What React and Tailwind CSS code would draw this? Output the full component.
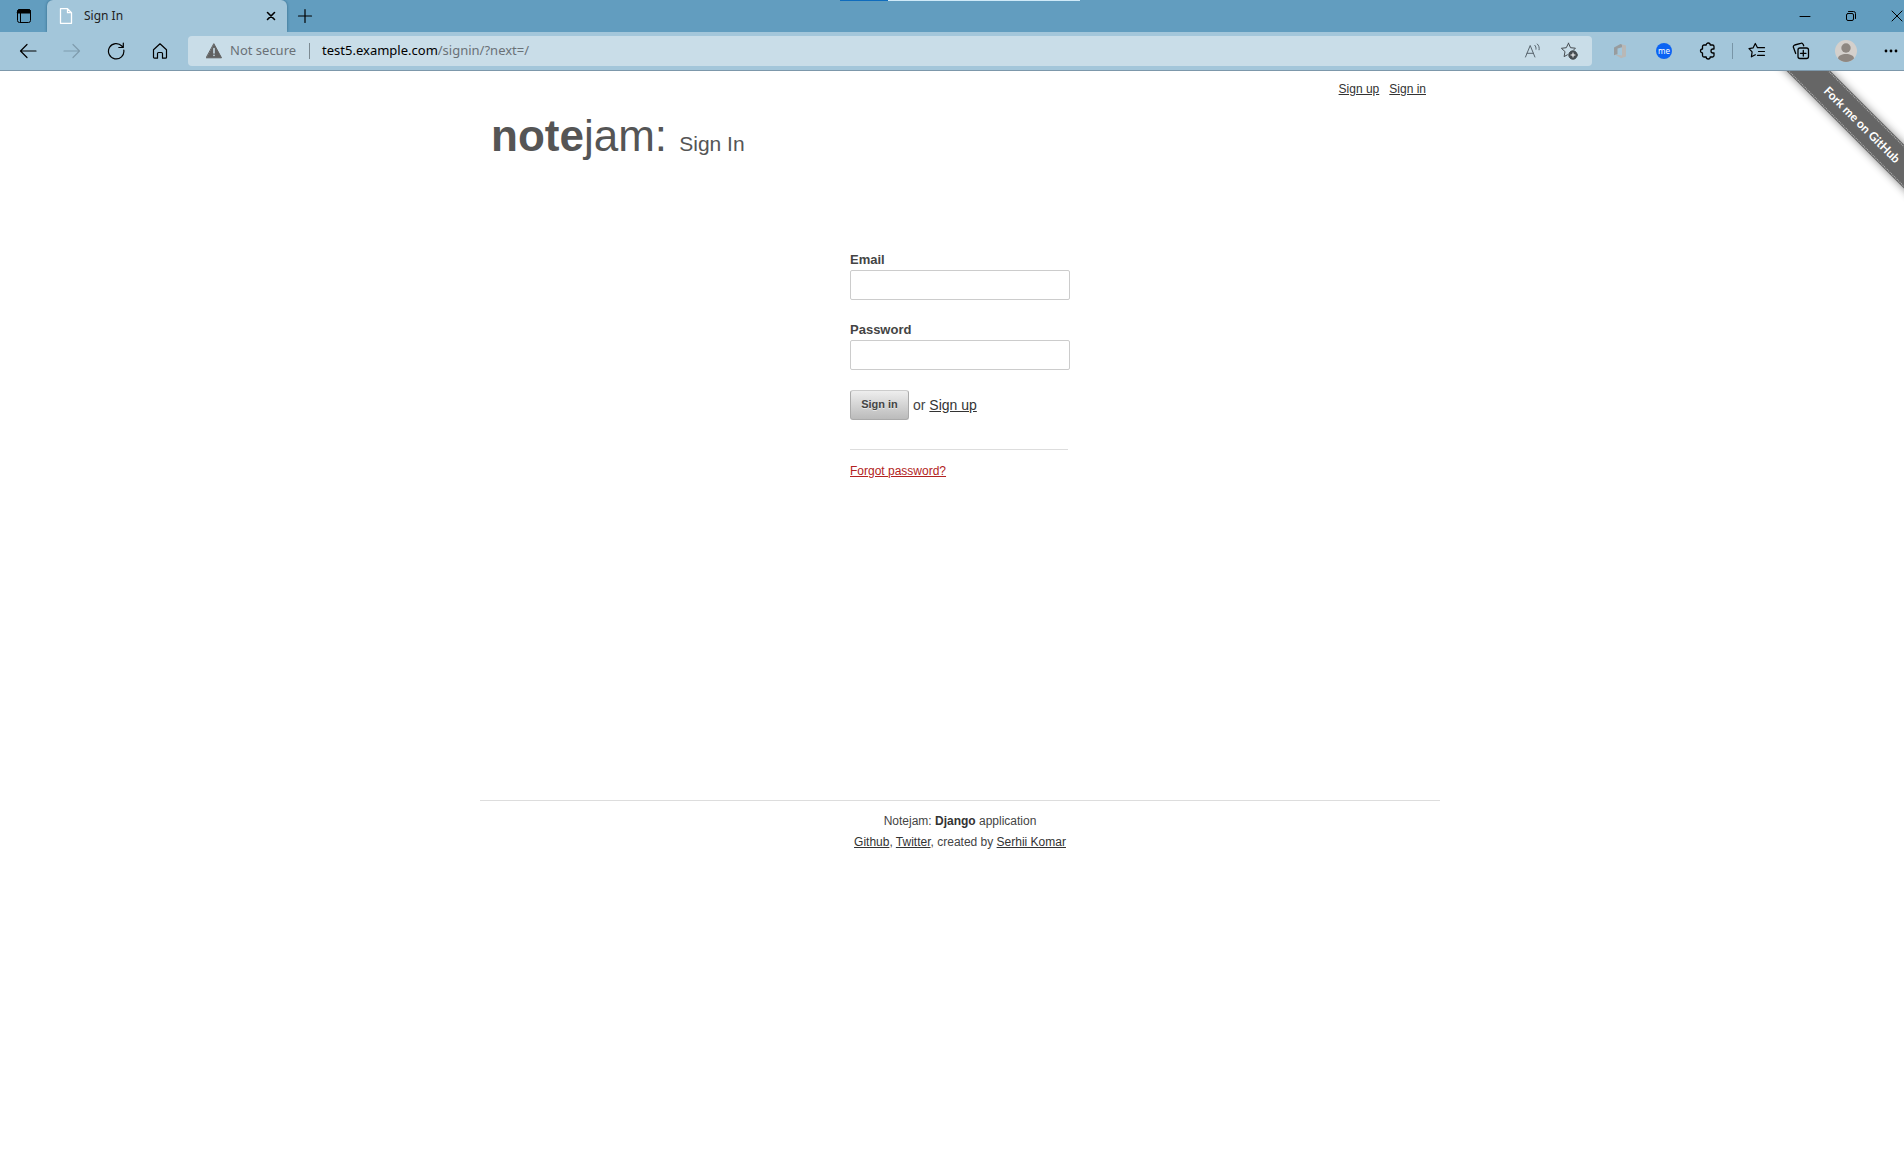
import React from "react";

function Icon({ size = 16, className = "", sw = 1, children }) {
  return (
    <svg width={size} height={size} viewBox={`0 0 ${size} ${size}`} fill="none" stroke="currentColor" strokeWidth={sw} strokeLinecap="round" strokeLinejoin="round" className={`shrink-0 ${className}`} aria-hidden="true">
      {children}
    </svg>
  );
}

function BarButton({ label, className = "w-11", children }) {
  return (
    <button type="button" aria-label={label} className={`flex h-8 shrink-0 items-center justify-center ${className}`}>
      {children}
    </button>
  );
}

function TabStrip() {
  return (
    <div className="flex h-8 bg-[#629dbf]">
      <BarButton label="Tab actions" className="w-[47px]">
        <Icon size={16}>
          <rect x="1.5" y="1.5" width="13" height="13" rx="2" />
          <path d="M1.5 3.5a2 2 0 0 1 2-2h9a2 2 0 0 1 2 2V5h-13z" fill="currentColor" />
          <path d="M4.5 5v9.500" />
        </Icon>
      </BarButton>
      <div className="flex w-60 items-center rounded-t-md bg-[#a3c6da] pl-[11px] shadow-[0_0_3px_#2f6686]">
        <Icon size={16} className="text-white" sw={1.3}>
          <path d="M2.500 .7h7l4 4v10.600h-11zM9.500 .7v4h4" />
        </Icon>
        <span className="ml-[10px] flex-1 text-xs text-[#222]">Sign In</span>
        <BarButton label="Close tab" className="w-8">
          <Icon size={16} sw={1.6}>
            <path d="M4.500 4.500l7 7M11.500 4.500l-7 7" />
          </Icon>
        </BarButton>
      </div>
      <BarButton label="New tab" className="w-9">
        <Icon size={16} sw={1.2}>
          <path d="M8 1.500v13M1.500 8h13" />
        </Icon>
      </BarButton>
      <div className="-mr-4 ml-auto flex">
        <BarButton label="Minimize" className="w-[46px]">
          <Icon size={12}>
            <path d="M1 6.500h10" />
          </Icon>
        </BarButton>
        <BarButton label="Restore" className="w-[46px]">
          <Icon size={12}>
            <rect x="1.500" y="3.500" width="7" height="7" rx="1.500" />
            <path d="M3.500 1.500h5a2 2 0 0 1 2 2v5" />
          </Icon>
        </BarButton>
        <BarButton label="Close" className="w-[46px]">
          <Icon size={12}>
            <path d="M1 1l10 10M11 1L1 11" />
          </Icon>
        </BarButton>
      </div>
      <div className="absolute inset-x-0 top-0 flex h-px justify-center pl-4">
        <span className="w-12 bg-[#0f6cbd]" />
        <span className="w-48 bg-[#cfeaf8]" />
      </div>
    </div>
  );
}

function Toolbar() {
  return (
    <div className="relative z-10 flex h-[39px] items-center border-b border-[#7d98ab] bg-[#a3c6da]">
      <div className="flex pl-[6px]">
        <BarButton label="Back">
          <Icon size={18} sw={1.2}>
            <path d="M17 9H1.500M8 2.500L1.500 9 8 15.500" />
          </Icon>
        </BarButton>
        <BarButton label="Forward">
          <Icon size={18} sw={1.2} className="text-[#7f9cad]">
            <path d="M1 9h15.500M10 2.500l6.500 6.500-6.500 6.500" />
          </Icon>
        </BarButton>
        <BarButton label="Refresh">
          <Icon size={18} sw={1.2}>
            <path d="M16.800 8.200A7.700 7.700 0 1 1 14.800 4L16 5.300M16.300 1v4.500h-4.500" />
          </Icon>
        </BarButton>
        <BarButton label="Home">
          <Icon size={18} sw={1.2}>
            <path d="M2.500 7.800L9 1.800l6.500 6v7.400a1 1 0 0 1-1 1h-3v-4.700a1 1 0 0 0-1-1h-3a1 1 0 0 0-1 1v4.700h-3a1 1 0 0 1-1-1z" />
          </Icon>
        </BarButton>
      </div>
      <div className="ml-[6px] flex h-[30px] min-w-0 flex-1 items-center rounded bg-[#c9dde8] pl-[18px] text-[13px]">
        <Icon size={16} className="text-[#616161]">
          <path d="M8 1L15.500 14.800H.5z" fill="currentColor" />
          <path d="M8 5.500v4.500M8 12.300v.2" stroke="#c9dde8" strokeWidth="1.6" />
        </Icon>
        <span className="ml-2 text-[#6a7177]">Not secure</span>
        <span className="mr-3 ml-[13px] h-4 w-px bg-[#7c8a92]" />
        <a href="#address" className="flex-1 whitespace-nowrap text-[#6a7177]">
          <span className="text-black">test5.example.com</span>/signin/?next=/
        </a>
        <BarButton label="Read aloud" className="w-9">
          <Icon size={18} className="text-[#58656e]">
            <path d="M1.500 15L6.200 3.500 10.900 15M3 11.300h6.400M10.800 3.300c1 1 1.400 2.300 1.200 3.900M13.300 2c1.600 1.500 2.200 3.500 1.800 5.800" />
          </Icon>
        </BarButton>
        <BarButton label="Add to favorites" className="mr-[5px] w-9">
          <Icon size={18} className="text-[#454b50]">
            <path d="M8.500 1.200l2 4.500 4.900.5-1.500 1.500M8.500 1.200l-2.200 4.500-4.900.6 3.600 3.300-.9 5 3.300-1.800" />
            <circle cx="13" cy="13" r="4.200" fill="currentColor" />
            <path d="M13 11v4M11 13h4" stroke="#fff" />
          </Icon>
        </BarButton>
      </div>
      <div className="-mr-[9px] ml-[6px] flex items-center">
        <BarButton label="Office extension">
          <Icon size={16}>
            <path d="M2 4.500L8.500 1l1.500.6v2.600L5.500 5.500v5.700L2 12.300z" fill="#989c9e" stroke="none" />
            <path d="M8.500 1L14 2.600v10.800L9 15.300l-6-3.700 7 .9V1.700z" fill="#b9b8b6" stroke="none" />
          </Icon>
        </BarButton>
        <BarButton label="me extension">
          <span className="flex size-4 items-center justify-center rounded-full bg-[#0b63f3] text-[8px] leading-none text-white">me</span>
        </BarButton>
        <BarButton label="Extensions">
          <Icon size={18} sw={1.3}>
            <path d="M5 3h2.200a2 2 0 0 1 4 0h2.300a1.500 1.500 0 0 1 1.500 1.500V7h-1a2 2 0 0 0 0 4h1v2.500a1.500 1.500 0 0 1-1.500 1.500h-2.300a2 2 0 0 1-4 0H5a1.500 1.500 0 0 1-1.500-1.500V11a2 2 0 0 1 0-4V4.500A1.500 1.500 0 0 1 5 3z" />
          </Icon>
        </BarButton>
        <span className="mx-[2px] h-4 w-px bg-[#7895a7]" />
        <BarButton label="Favorites">
          <Icon size={18} sw={1.2}>
            <path d="M9.500 5.700L7.300 1.500 5.200 5.800l-4.200.8 3.100 3.300-.7 4.900 3.900-2.100M9.500 5.700h7M10.500 9.500h6M9.500 13.300h7" />
          </Icon>
        </BarButton>
        <BarButton label="Collections">
          <Icon size={18} sw={1.3}>
            <rect x="6" y="6" width="10.500" height="10.500" rx="2" />
            <path d="M11.300 8.500v5.500M8.500 11.300h5.500M3.700 11.500L1.500 5.600a2 2 0 0 1 1.200-2.600l6-1.700a2 2 0 0 1 2.500 1.300l.5 1.200" />
          </Icon>
        </BarButton>
        <BarButton label="Profile" className="w-[46px]">
          <svg width="22" height="22" viewBox="0 0 22 22" aria-hidden="true">
            <circle cx="11" cy="11" r="11" fill="#d4d0cc" />
            <circle cx="11" cy="8" r="4.700" fill="#8e8781" />
            <path d="M3 18.500c0-6 16-6 16 0a11 11 0 0 1-16 0z" fill="#8e8781" />
          </svg>
        </BarButton>
        <BarButton label="Settings and more">
          <Icon size={16}>
            <g fill="currentColor" stroke="none">
              <circle cx="3" cy="8" r="1.400" />
              <circle cx="8" cy="8" r="1.400" />
              <circle cx="13" cy="8" r="1.400" />
            </g>
          </Icon>
        </BarButton>
      </div>
    </div>
  );
}

function Ribbon() {
  return (
    <div className="absolute top-0 right-0 size-[150px] overflow-hidden">
      <a href="#github" className="absolute top-[41px] -left-[9px] flex h-[31px] w-60 rotate-45 items-center justify-center bg-[#666] py-px font-[Lato,sans-serif] text-xs font-bold text-white shadow-[0_0_8px_#888]">
        <span className="flex h-full w-full items-center justify-center border-y border-dotted border-[#b5b5b5] pr-2">Fork me on GitHub</span>
      </a>
    </div>
  );
}

function Field({ id, label, type }) {
  return (
    <div className="mb-5">
      <label htmlFor={id} className="block h-5 text-[13px] leading-5 font-bold">{label}</label>
      <input id={id} type={type} className="block h-[30px] w-[220px] rounded-xs border border-[#ccc] bg-white px-1 outline-none" />
    </div>
  );
}

const link = "text-[#333] underline";

export default function App() {
  return (
    <div className="min-h-screen overflow-hidden bg-white">
      <header className="relative overflow-hidden font-['Noto_Sans','Open_Sans',sans-serif] text-black">
        <TabStrip />
        <Toolbar />
      </header>
      <div className="relative pl-4 font-['Liberation_Sans',Arial,sans-serif] text-sm text-[#444]">
        <Ribbon />
        <div className="mx-auto max-w-[960px]">
          <nav className="flex justify-end gap-[10px] pt-2 pr-[14px] text-xs leading-5">
            <a href="#signup" className={link}>Sign up</a>
            <a href="#signin" className={link}>Sign in</a>
          </nav>
          <h1 className="mt-3 ml-[11px] text-[44px] leading-[50px] text-[#555]">
            <a href="#home"><b>note</b>jam:</a> <span className="text-[21px]">Sign In</span>
          </h1>
          <main className="mx-auto mt-[81px] w-[220px]">
            <form onSubmit={(e) => e.preventDefault()}>
              <Field id="email" label="Email" type="email" />
              <Field id="password" label="Password" type="password" />
              <div className="flex items-center gap-1">
                <button type="submit" className="h-[30px] w-[59px] rounded-[3px] border border-[#aaa] border-t-[#ccc] bg-linear-to-b from-[#eee] to-[#bbb] text-[11px] font-bold [text-shadow:0_1px_#fff8]">Sign in</button>
                <p>or <a href="#signup" className={link}>Sign up</a></p>
              </div>
            </form>
            <hr className="mt-[29px] mr-[2px] border-[#ddd]" />
            <p className="mt-[11px] text-xs leading-5"><a href="#forgot" className="text-[#b22222] underline">Forgot password?</a></p>
          </main>
          <footer className="mt-[319px] border-t border-[#ddd] pt-[10px] text-center text-xs leading-[21px]">
            <p>Notejam: <b className="text-[#333]">Django</b> application</p>
            <p><a href="#github" className={link}>Github</a>, <a href="#twitter" className={link}>Twitter</a>, created by <a href="#author" className={link}>Serhii Komar</a></p>
          </footer>
        </div>
      </div>
    </div>
  );
}
